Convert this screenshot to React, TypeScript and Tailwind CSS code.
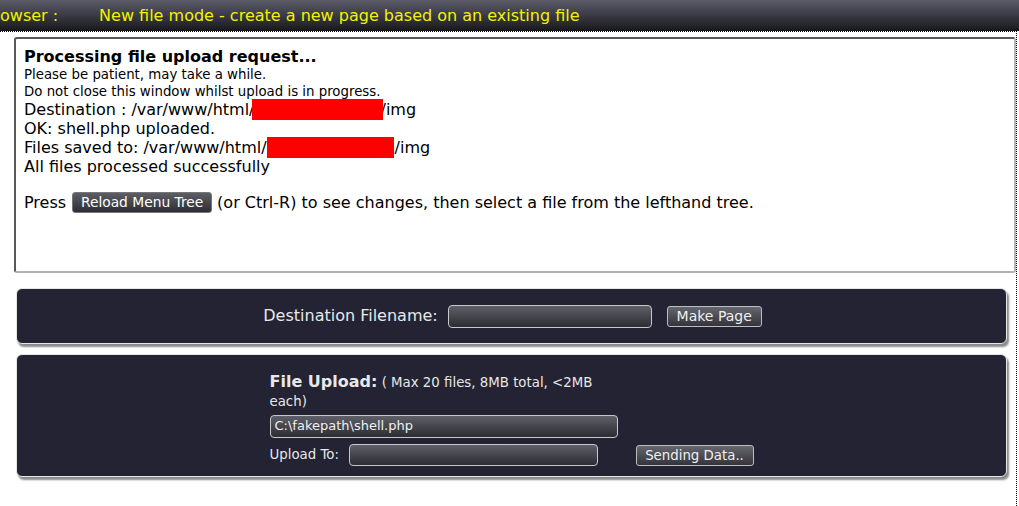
import React from "react";

const font = { fontFamily: '"DejaVu Sans", sans-serif' };

function Field({ w, h, value }: { w: string; h: string; value?: string }) {
  return (
    <div
      className={`${w} ${h} rounded-[4px] border border-[#c8c8c8] bg-gradient-to-b from-[#60606a] to-[#2c2c34] text-[13px] leading-[20px] text-[#f0f0f0] px-[4px] overflow-hidden whitespace-nowrap`}
    >
      {value}
    </div>
  );
}

function DarkBtn({ children, w, t }: { children: React.ReactNode; w: string; t: string }) {
  return (
    <div
      className={`${w} h-[21px] rounded-[3px] border border-[#bdbdbd] bg-gradient-to-b from-[#66666e] to-[#34343c] ${t} leading-[19px] text-[#f0f0f0] text-center whitespace-nowrap`}
    >
      {children}
    </div>
  );
}

export default function App() {
  return (
    <div style={font} className="w-[1019px] h-[506px] bg-white overflow-hidden">
      <div className="h-[31px] bg-gradient-to-b from-[#5c5c68] via-[#3a3a46] to-[#18181a] flex items-center text-[16px] text-[#f2f200] whitespace-nowrap">
        <span className="ml-[0px]">owser :</span>
        <span className="ml-[41px]">New file mode - create a new page based on an existing file</span>
      </div>
      <div className="w-[1017px] h-[475px] border-t border-r border-dotted border-black pt-[5px]">
        <div className="ml-[14px] mr-0 h-[236px] rounded-[3px] border-2 border-t-[#585858] border-l-[#585858] border-r-[#b4b4b4] border-b-[#b4b4b4] pl-[8px] pt-[9px] text-black text-[16px]">
          <div className="font-bold leading-[18px]">Processing file upload request...</div>
          <div className="text-[13.33px] leading-[17px]">Please be patient, may take a while.</div>
          <div className="text-[13.33px] leading-[17px]">Do not close this window whilst upload is in progress.</div>
          <div className="leading-[19px] flex items-center">
            <span>Destination : /var/www/html/</span>
            <span className="relative z-10 ml-[-3px] inline-block w-[131px] h-[21px] -my-[1px] bg-[#ff0000]"></span>
            <span className="ml-[-2px]">/img</span>
          </div>
          <div className="leading-[19px]">OK: shell.php uploaded.</div>
          <div className="leading-[19px] flex items-center">
            <span>Files saved to: /var/www/html/</span>
            <span className="inline-block w-[127px] h-[21px] -my-[1px] bg-[#ff0000]"></span>
            <span className="ml-[1px]">/img</span>
          </div>
          <div className="leading-[19px]">All files processed successfully</div>
          <div className="leading-[19px] mt-[16px] flex items-center">
            <span>Press</span>
            <span className="ml-[6px] mr-[5px] inline-block w-[140px] h-[21px] rounded-[3px] border border-[#777] bg-gradient-to-b from-[#5e5e66] to-[#2e2e34] text-[13.8px] leading-[19px] text-white text-center">
              Reload Menu Tree
            </span>
            <span>(or Ctrl-R) to see changes, then select a file from the lefthand tree.</span>
          </div>
        </div>

        <div className="ml-[16px] mr-[9px] mt-[15px] h-[56px] rounded-[6px] border border-[#e6e6e6] bg-[#232333] shadow-[2px_3px_2px_#8a8a8a] flex items-center justify-center text-[#e8e8e8]">
          <span className="text-[16px] mr-[10px] ml-[2px]">Destination Filename:</span>
          <Field w="w-[204px]" h="h-[23px]" />
          <div className="ml-[15px]">
            <DarkBtn w="w-[95px]" t="text-[14px]">Make Page</DarkBtn>
          </div>
        </div>

        <div className="ml-[16px] mr-[9px] mt-[10px] h-[123px] rounded-[6px] border border-[#e6e6e6] bg-[#232333] shadow-[2px_3px_2px_#8a8a8a] flex justify-center text-[#e8e8e8]">
          <div className="w-[484px] pt-[17px]">
            <div className="w-[348px] text-[13.33px] leading-[19px]">
              <span className="text-[16px] font-bold">File Upload:</span> ( Max 20 files, 8MB total, &lt;2MB each)
            </div>
            <div className="mt-[4px]">
              <Field w="w-[348px]" h="h-[23px]" value="C:\fakepath\shell.php" />
            </div>
            <div className="mt-[6px] flex items-center">
              <span className="text-[13.33px] w-[79px]">Upload To:</span>
              <Field w="w-[249px]" h="h-[22px]" />
              <div className="ml-[38px]">
                <DarkBtn w="w-[118px]" t="text-[13.33px]">Sending Data..</DarkBtn>
              </div>
            </div>
          </div>
        </div>
      </div>
    </div>
  );
}
